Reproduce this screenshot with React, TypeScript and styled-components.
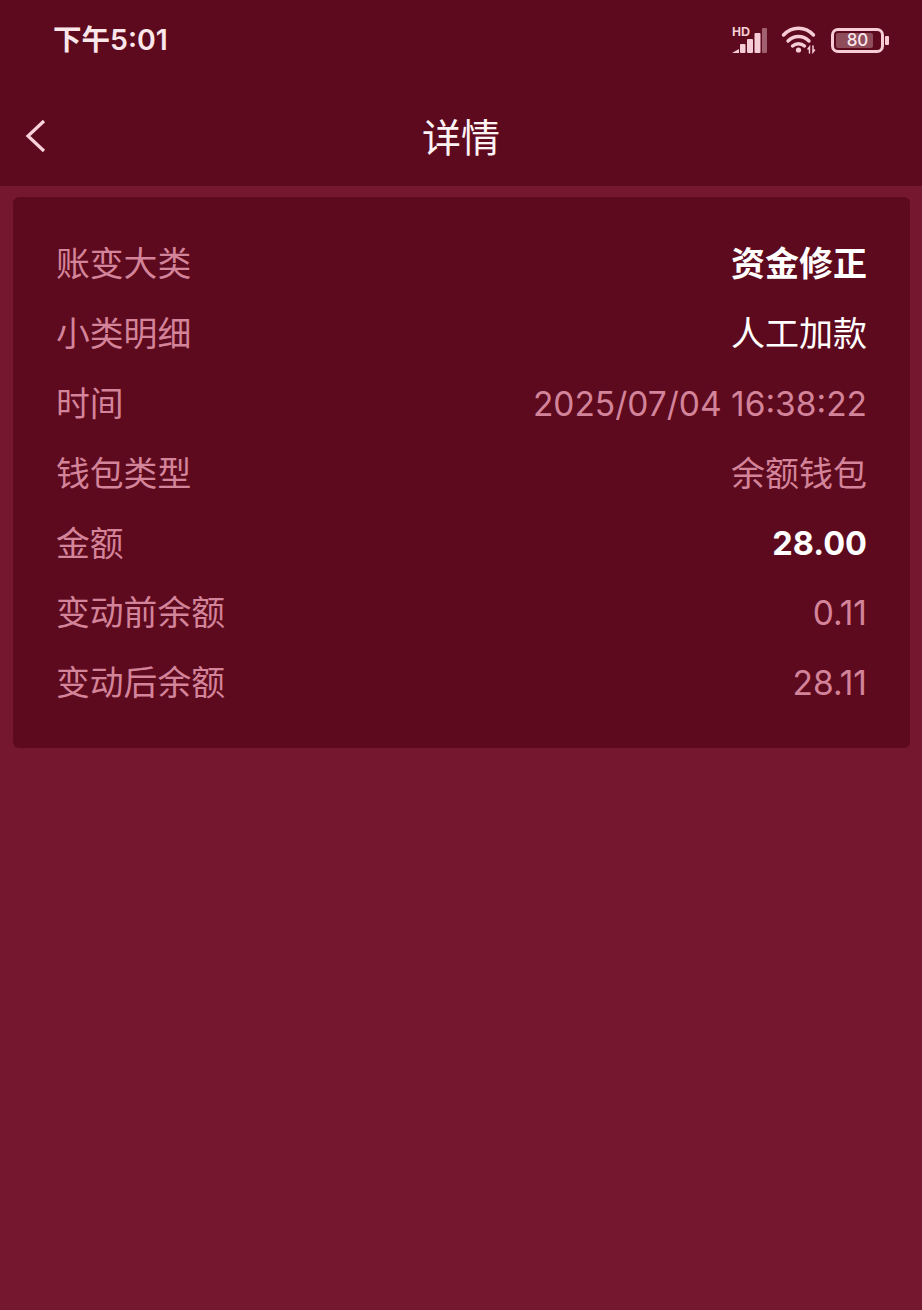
import React from 'react'
import styled, { createGlobalStyle } from 'styled-components'

const rows = [
  { label: '账变大类', value: '资金修正', tone: 'strong', numeric: false },
  { label: '小类明细', value: '人工加款', tone: 'white', numeric: false },
  { label: '时间', value: '2025/07/04 16:38:22', tone: 'muted', numeric: true },
  { label: '钱包类型', value: '余额钱包', tone: 'muted', numeric: false },
  { label: '金额', value: '28.00', tone: 'strong', numeric: true },
  { label: '变动前余额', value: '0.11', tone: 'muted', numeric: true },
  { label: '变动后余额', value: '28.11', tone: 'muted', numeric: true },
]

const App = () => {
  return (
    <Page>
      <GlobalStyle />
      <Top>
        <StatusBar>
          <Clock>下午5:01</Clock>
          <StatusIcons>
            <Signal width='36' height='28' viewBox='0 0 36 28'>
              <text x='0' y='10' fontSize='12.5' fontWeight='700' fontFamily='Liberation Sans, sans-serif' fill='#f6cdd6'>HD</text>
              <path d='M0 27 L7 23 V27 Z' fill='#f6cdd6' />
              <rect x='8' y='18' width='5.5' height='9' rx='1' fill='#f6cdd6' />
              <rect x='15' y='13' width='6' height='14' rx='1' fill='#f6cdd6' />
              <rect x='22.5' y='7' width='6' height='20' rx='1' fill='#f6cdd6' />
              <rect x='30' y='2' width='5' height='25' rx='1' fill='#a0606e' />
            </Signal>
            <Wifi width='37' height='28' viewBox='0 0 37 28'>
              <path d='M2.5 9 C11 0 24 0 32.5 9' />
              <path d='M7 15 C13 9 22 9 28 15' />
              <path d='M11.5 20 C15 17 20 17 23.5 20' />
              <circle cx='17.5' cy='24' r='2.6' fill='#f6cdd6' stroke='none' />
              <path d='M28.5 27 V21 L27 23 M32 20 V26 L33.5 24' strokeWidth='1.5' />
            </Wifi>
            <Battery>
              <BatteryBody>
                <BatteryLevel />
                <BatteryText>80</BatteryText>
              </BatteryBody>
              <BatteryCap />
            </Battery>
          </StatusIcons>
        </StatusBar>
        <NavBar>
          <BackButton width='24' height='34' viewBox='0 0 24 34'>
            <path d='M21 2 L5 17 L21 32' />
          </BackButton>
          <Title>详情</Title>
        </NavBar>
      </Top>
      <Card>
        {rows.map((row) => (
          <Row key={row.label}>
            <Label>{row.label}</Label>
            <Value $tone={row.tone} $numeric={row.numeric}>
              {row.value}
            </Value>
          </Row>
        ))}
      </Card>
    </Page>
  )
}

const GlobalStyle = createGlobalStyle`
  html, body {
    margin: 0;
    padding: 0;
    background: #75182f;
  }
`

const Page = styled.div`
  width: 922px;
  height: 1310px;
  background: #75182f;
  font-family: 'Noto Sans CJK SC', 'Roboto', sans-serif;
  overflow: hidden;
`

const Top = styled.div`
  background: #5e0a1e;
  height: 186px;
  box-sizing: border-box;
`

const StatusBar = styled.div`
  height: 80px;
  padding: 0 33px 0 53px;
  display: flex;
  align-items: center;
  justify-content: space-between;
`

const Clock = styled.div`
  color: #fbe6ea;
  font-size: 28.5px;
  line-height: 40px;
  font-weight: 600;
  font-family: 'Inter', 'Noto Sans CJK SC', sans-serif;
`

const StatusIcons = styled.div`
  display: flex;
  align-items: center;
  gap: 13px;
`

const Signal = styled.svg`
  display: block;
`

const Wifi = styled.svg`
  display: block;
  fill: none;
  stroke: #f6cdd6;
  stroke-width: 3.4;
  stroke-linecap: round;
`

const Battery = styled.div`
  display: flex;
  align-items: center;
  gap: 1px;
`

const BatteryBody = styled.div`
  position: relative;
  width: 53px;
  height: 25px;
  box-sizing: border-box;
  border: 3px solid #f6cdd6;
  border-radius: 7px;
  padding: 2px;
`

const BatteryLevel = styled.div`
  width: 85%;
  height: 100%;
  background: #8f4c5b;
  border-radius: 2px;
`

const BatteryText = styled.span`
  position: absolute;
  inset: 0;
  display: flex;
  align-items: center;
  justify-content: center;
  color: #fbe6ea;
  font-size: 17px;
  font-weight: 500;
  font-family: 'Inter', sans-serif;
`

const BatteryCap = styled.div`
  width: 4px;
  height: 9px;
  background: #f6cdd6;
  border-radius: 1px;
`

const NavBar = styled.div`
  position: relative;
  height: 106px;
  display: flex;
  align-items: center;
  justify-content: center;
  padding-top: 4px;
  box-sizing: border-box;
`

const BackButton = styled.svg`
  position: absolute;
  left: 23px;
  top: 39px;
  fill: none;
  stroke: #f9d3dc;
  stroke-width: 3.2;
`

const Title = styled.div`
  color: #fdf2f4;
  font-size: 39px;
  font-weight: 400;
  line-height: 56px;
`

const Card = styled.div`
  margin: 11px 12px 0 13px;
  height: 551px;
  box-sizing: border-box;
  padding: 30px 43px 0 43px;
  background: #5e0a1e;
  border-radius: 6px;
`

const Row = styled.div`
  height: 69.9px;
  display: flex;
  align-items: center;
  justify-content: space-between;
`

const Label = styled.div`
  color: #d3849a;
  font-size: 33.8px;
  line-height: 44px;
  font-weight: 400;
`

const Value = styled.div<{ $tone: string; $numeric: boolean }>`
  margin-top: 4px;
  font-size: ${({ $numeric, $tone }) => (!$numeric ? '34px' : $tone === 'strong' ? '32.5px' : '33.5px')};
  line-height: 44px;
  font-family: 'Inter', 'Noto Sans CJK SC', sans-serif;
  font-weight: ${({ $tone }) => ($tone === 'strong' ? 700 : 400)};
  color: ${({ $tone }) => ($tone === 'muted' ? '#d3849a' : '#ffffff')};
`

export default App
